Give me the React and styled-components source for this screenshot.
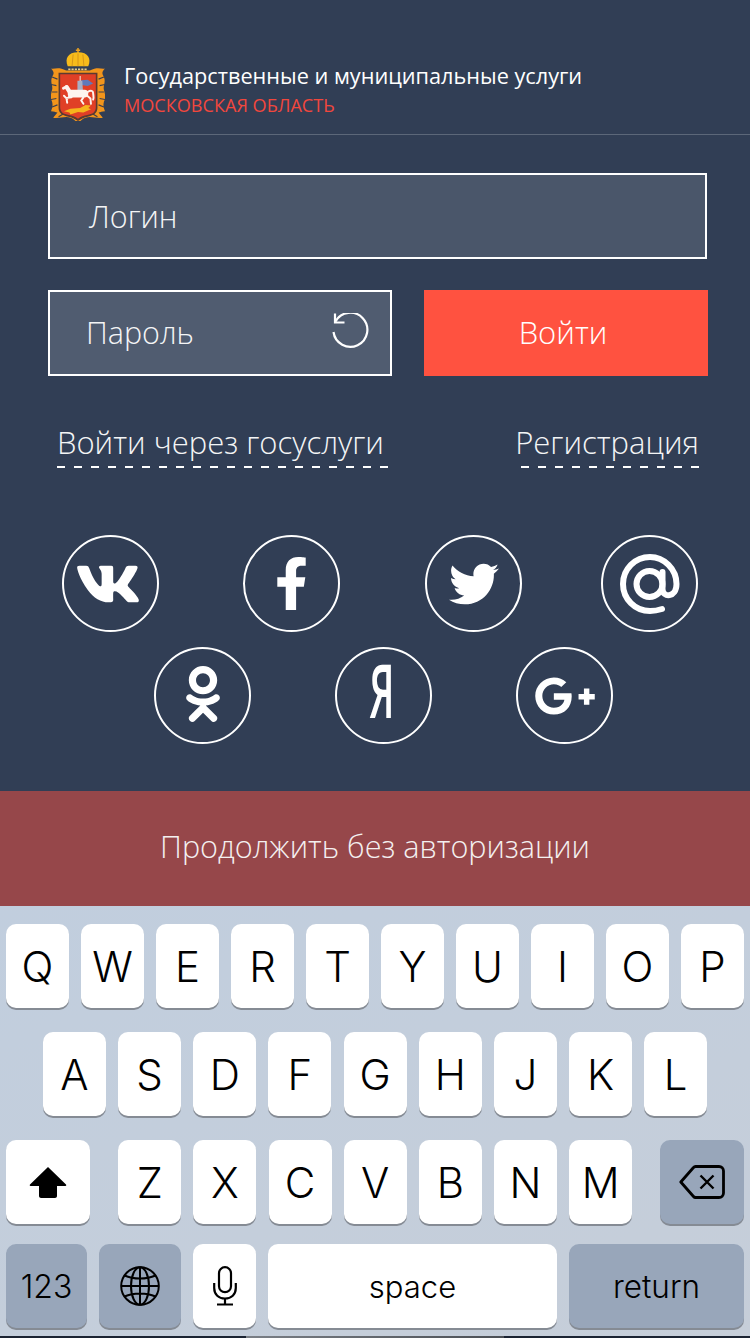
import React from "react";
import styled, { createGlobalStyle } from "styled-components";
import { FaVk, FaFacebookF, FaTwitter, FaOdnoklassniki, FaGooglePlusG } from "react-icons/fa";

const GlobalStyle = createGlobalStyle`
  html, body {
    margin: 0;
    padding: 0;
    background: #313e55;
  }
  * {
    box-sizing: border-box;
  }
`;

const ROW_ONE = ["Q", "W", "E", "R", "T", "Y", "U", "I", "O", "P"];
const ROW_TWO = ["A", "S", "D", "F", "G", "H", "J", "K", "L"];
const ROW_THREE = ["Z", "X", "C", "V", "B", "N", "M"];

function Logo() {
  return (
    <svg width="54" height="73" viewBox="2 0 50 68" preserveAspectRatio="none">
      <path d="M27 0v6M25 2h4" stroke="#eda11f" strokeWidth="1.400" fill="none" />
      <path d="M17.500 17c-3-7 0-13 9.500-13s12.500 6 9.500 13z" fill="#f7bb1b" />
      <path d="M27 5v12M22.500 6l-1 11M31.500 6l1 11" stroke="#c98a18" strokeWidth=".7" fill="none" />
      <path d="M18 20h18" stroke="#e8cf8a" strokeWidth="1.600" strokeDasharray="2 1" />
      {/* ribbon frame */}
      <path d="M16 21C9 17 5 20 2 19c3 3 3 5 1 8-2 5 1 8 0 12-1 4-2 7 0 11 1 4 0 6-1 9 3 0 4 1 6 1l-4 5c6 1 11-2 16 0 3 1 5 3 7 6 2-3 4-5 7-6 5-2 10 1 16 0l-4-5c2 0 3-1 6-1-1-3-2-5-1-9 2-4 1-7 0-11-1-4 2-7 0-12-2-3-2-5 1-8-3 1-7-2-14 2z" fill="#f2951b" />
      <path d="M3 27l5 2M2 34l5 1M3 41l5 0M2 48l5-1M3 55l5-2M9 64l5-3M16 69l3-4M51 27l-5 2M52 34l-5 1M51 41l-5 0M52 48l-5-1M51 55l-5-2M45 64l-5-3M38 69l-3-4" stroke="#3a3f4f" strokeWidth="1.100" fill="none" />
      <path d="M9 23h36v33c0 5-4 7-9 8-3 .5-6 2-9 4-3-2-6-3.500-9-4-5-1-9-3-9-8z" fill="#5c3a30" />
      <path d="M10.500 24.500h33V55c0 5-3 6.500-8 7.500-3 .5-6 1.500-8.500 3.500-2.500-2-5.500-3-8.500-3.500-5-1-8-2.500-8-7.500z" fill="#e03f26" />
      {/* rider and horse */}
      <path d="M29 26v16" stroke="#f0e6dc" strokeWidth="1" />
      <path d="M30 30l6-.5 5 3.500-5 2.500-6-1z" fill="#5f79ba" />
      <path d="M26.500 30.500h4.500l.5 8-1 3h-4z" fill="#a7afc4" />
      <g fill="none" stroke="#fdf4ef" strokeLinecap="round">
        <path d="M21 42.500h12" strokeWidth="7" />
        <path d="M20 42l-3.500-5.500" strokeWidth="4" />
        <path d="M16.500 36l-3 1.500" strokeWidth="2.600" />
        <path d="M19 45l-2.500 3 .5 3M21 46l-5 .5-2-2" strokeWidth="1.800" />
        <path d="M35 44l3.500 3 .5 5M32 46l-2 3 2 3" strokeWidth="1.800" />
        <path d="M36 41c3-2 5-1 5 1s1 4 0 6" strokeWidth="1.800" />
      </g>
      {/* dragon */}
      <path d="M14 59l6-2.500 9-.5 5-3 5 .5-2.500 2.500 2.500 1-7 3-5-.5-7 2.500-1-2z" fill="#f6b41d" />
    </svg>
  );
}

function RestoreIcon() {
  return (
    <svg width="38" height="38" viewBox="0 0 38 38" fill="none" stroke="#fff" strokeWidth="2.200">
      <path d="M3.500 8.500A17 17 0 1 1 1.500 19" />
      <path d="M3 .5V9.500H12.500" />
    </svg>
  );
}

function MailIcon() {
  return (
    <svg width="60" height="60" viewBox="0 0 60 60" fill="none" stroke="#fff" strokeWidth="6">
      <circle cx="29.500" cy="30" r="13" />
      <path d="M42.500 18v17c0 9 14 9 14-5C56.500 15 44 3 30 3 15 3 3 15 3 30s12 27 27 27c5 0 9-1 12-2" strokeLinecap="round" />
    </svg>
  );
}

function ShiftIcon() {
  return (
    <svg width="38" height="32" viewBox="0 0 38 32">
      <path d="M19 1L37 18.500c.5.5.3 1.500-.5 1.500H28v10c0 1-1 2-2 2H12c-1 0-2-1-2-2V20H1.500c-.8 0-1-1-.5-1.500z" fill="#000" />
    </svg>
  );
}

function DeleteIcon() {
  return (
    <svg width="46" height="34" viewBox="0 0 46 34" fill="none" stroke="#000">
      <path d="M1.800 17L14.500 2.500c.5-.6 1-1 2-1H40c2.500 0 4.500 2 4.500 4.500v22c0 2.500-2 4.500-4.500 4.500H16.500c-1 0-1.500-.4-2-1z" strokeWidth="2.800" strokeLinejoin="round" />
      <path d="M21.500 10.500l13 13M34.500 10.500l-13 13" strokeWidth="2.400" />
    </svg>
  );
}

function GlobeIcon() {
  return (
    <svg width="40" height="40" viewBox="0 0 40 40" fill="none" stroke="#000" strokeWidth="2">
      <circle cx="20" cy="20" r="18.800" />
      <ellipse cx="20" cy="20" rx="9" ry="18.800" />
      <path d="M20 1v38M1.500 20h37M4.500 9.500c9 4 22 4 31 0M4.500 30.500c9-4 22-4 31 0" />
    </svg>
  );
}

function MicIcon() {
  return (
    <svg width="24" height="40" viewBox="0 0 24 40" fill="none" stroke="#000" strokeWidth="2.200">
      <rect x="6" y="1.200" width="12" height="25" rx="6" />
      <path d="M1.200 17v5c0 6.500 4.500 10.500 10.800 10.500S22.800 28.500 22.800 22v-5M12 32.500V38M4 38.500h16" />
    </svg>
  );
}

const Page = styled.div`
  width: 750px;
  height: 1338px;
  display: flex;
  flex-direction: column;
  background: #313e55;
  overflow: hidden;
  font-family: "Open Sans", "Liberation Sans", sans-serif;
  color: #fff;
`;

const Header = styled.header`
  height: 135px;
  flex: none;
  display: flex;
  align-items: flex-start;
  gap: 19px;
  padding: 48px 0 0 51px;
  border-bottom: 1px solid #5c6779;
`;

const Titles = styled.div`
  display: flex;
  flex-direction: column;
  padding-top: 13px;
`;

const Title = styled.div`
  font-size: 21.700px;
  line-height: 30px;
  white-space: nowrap;
`;

const Region = styled.div`
  font-size: 18.100px;
  line-height: 29px;
  color: #f1473d;
  white-space: nowrap;
`;

const Form = styled.div`
  padding: 38px 42px 0 48px;
  display: flex;
  flex-direction: column;
  gap: 31px;
`;

const Field = styled.div`
  height: 86px;
  width: ${(p) => p.$width}px;
  display: flex;
  align-items: center;
  justify-content: space-between;
  padding: 0 20px ${(p) => p.$lift || 0}px ${(p) => p.$inset}px;
  border: 2px solid #fff;
  background: ${(p) => p.$bg};
  font-size: 30.500px;
  font-weight: 300;
  color: #f4f5f6;
`;

const FormRow = styled.div`
  display: flex;
  gap: 32px;
`;

const Submit = styled.button`
  width: 284px;
  height: 86px;
  margin: 0;
  padding: 0 6px 3px 0;
  border: 0;
  background: #ff5240;
  color: #fff;
  font-family: inherit;
  font-size: 31px;
  font-weight: 300;
`;

const Links = styled.div`
  margin-top: 46px;
  padding: 0 51px 0 57px;
  display: flex;
  justify-content: space-between;
`;

const AuthLink = styled.a`
  display: block;
  height: 46px;
  padding: 0 ${(p) => p.$pad}px 0 0;
  font-size: 31px;
  line-height: 40px;
  font-weight: 300;
  color: #f4f5f6;
  white-space: nowrap;
  background: repeating-linear-gradient(90deg, #fff 0 8px, transparent 8px 17px) right bottom / ${(p) => p.$dashes} 2px no-repeat;
`;

const Social = styled.div`
  margin-top: 67px;
  display: flex;
  flex-direction: column;
  gap: 15px;
`;

const SocialRow = styled.div`
  display: flex;
  padding-left: ${(p) => p.$left}px;
`;

const Circle = styled.a`
  width: 97px;
  height: 97px;
  margin-left: ${(p) => p.$gap || 0}px;
  padding-right: ${(p) => p.$nudge || 0}px;
  padding-bottom: ${(p) => p.$lift || 0}px;
  flex: none;
  display: flex;
  align-items: center;
  justify-content: center;
  border: 2px solid #fff;
  border-radius: 50%;
  color: #fff;
  font-size: ${(p) => p.$size}px;
`;

const YandexGlyph = styled.span`
  font-size: 74px;
  line-height: 1;
  font-weight: 600;
  transform: scaleX(0.52);
`;

const Continue = styled.div`
  margin-top: 47px;
  height: 115px;
  flex: none;
  display: flex;
  align-items: center;
  justify-content: center;
  padding-bottom: 5px;
  background: #96474a;
  font-size: 30.600px;
  font-weight: 300;
  color: #f4f0f0;
`;

const Keyboard = styled.div`
  flex: 1;
  display: flex;
  flex-direction: column;
  padding-top: 18px;
  background: linear-gradient(160deg, #c1cede, #c6ced9);
  font-family: Inter, "Liberation Sans", sans-serif;
  color: #000;
`;

const KeyRow = styled.div`
  display: flex;
  gap: ${(p) => p.$gap || 12}px;
  margin-bottom: ${(p) => p.$bottom}px;
  padding-left: ${(p) => p.$left}px;
`;

const Key = styled.div`
  width: ${(p) => p.$w || 63}px;
  height: 84px;
  flex: none;
  display: flex;
  align-items: center;
  justify-content: center;
  border-radius: 10px;
  background: ${(p) => (p.$dark ? "#98a6ba" : "#fff")};
  box-shadow: 0 2px 0 #858b94;
  font-size: ${(p) => p.$size || 42}px;
  font-weight: 350;
`;

const ShiftRow = styled(KeyRow)`
  ${Key}:first-child {
    margin-right: 16.100px;
  }
  ${Key}:last-child {
    margin-left: 16px;
  }
`;

const HomeStrip = styled.div`
  height: 2px;
  margin-top: 8px;
  background: linear-gradient(90deg, #1b2332 0 246px, #7a7f86 246px, #4b4f55 504px, #1b2332 504px);
`;

export default function App() {
  return (
    <Page>
      <GlobalStyle />
      <Header>
        <Logo />
        <Titles>
          <Title>Государственные и муниципальные услуги</Title>
          <Region>МОСКОВСКАЯ ОБЛАСТЬ</Region>
        </Titles>
      </Header>

      <Form>
        <Field $width={659} $inset={39} $bg="#4a566a">Логин</Field>
        <FormRow>
          <Field $width={344} $inset={36} $lift={3} $bg="#505c70">
            Пароль
            <RestoreIcon />
          </Field>
          <Submit>Войти</Submit>
        </FormRow>
      </Form>

      <Links>
        <AuthLink $pad={5} $dashes="100%">Войти через госуслуги</AuthLink>
        <AuthLink $pad={0} $dashes="178px">Регистрация</AuthLink>
      </Links>

      <Social>
        <SocialRow $left={62}>
          <Circle $size={66} $nudge={5}><FaVk /></Circle>
          <Circle $gap={84} $size={53}><FaFacebookF /></Circle>
          <Circle $gap={85} $size={50}><FaTwitter /></Circle>
          <Circle $gap={79}><MailIcon /></Circle>
        </SocialRow>
        <SocialRow $left={154}>
          <Circle $size={56} $lift={3}><FaOdnoklassniki /></Circle>
          <Circle $gap={84} $lift={11} $nudge={3}><YandexGlyph>Я</YandexGlyph></Circle>
          <Circle $gap={84} $size={62}><FaGooglePlusG /></Circle>
        </SocialRow>
      </Social>

      <Continue>Продолжить без авторизации</Continue>

      <Keyboard>
        <KeyRow $left={6} $bottom={24}>
          {ROW_ONE.map((k) => <Key key={k}>{k}</Key>)}
        </KeyRow>
        <KeyRow $left={43} $bottom={24} $gap={12.15}>
          {ROW_TWO.map((k) => <Key key={k}>{k}</Key>)}
        </KeyRow>
        <ShiftRow $left={6} $bottom={20} $gap={12.15}>
          <Key $w={84}><ShiftIcon /></Key>
          {ROW_THREE.map((k) => <Key key={k}>{k}</Key>)}
          <Key $w={84} $dark><DeleteIcon /></Key>
        </ShiftRow>
        <KeyRow $left={6} $bottom={0}>
          <Key $w={81} $dark $size={32}>123</Key>
          <Key $w={82} $dark><GlobeIcon /></Key>
          <Key><MicIcon /></Key>
          <Key $w={289} $size={31}>space</Key>
          <Key $w={175} $dark $size={31.5}>return</Key>
        </KeyRow>
        <HomeStrip />
      </Keyboard>
    </Page>
  );
}
